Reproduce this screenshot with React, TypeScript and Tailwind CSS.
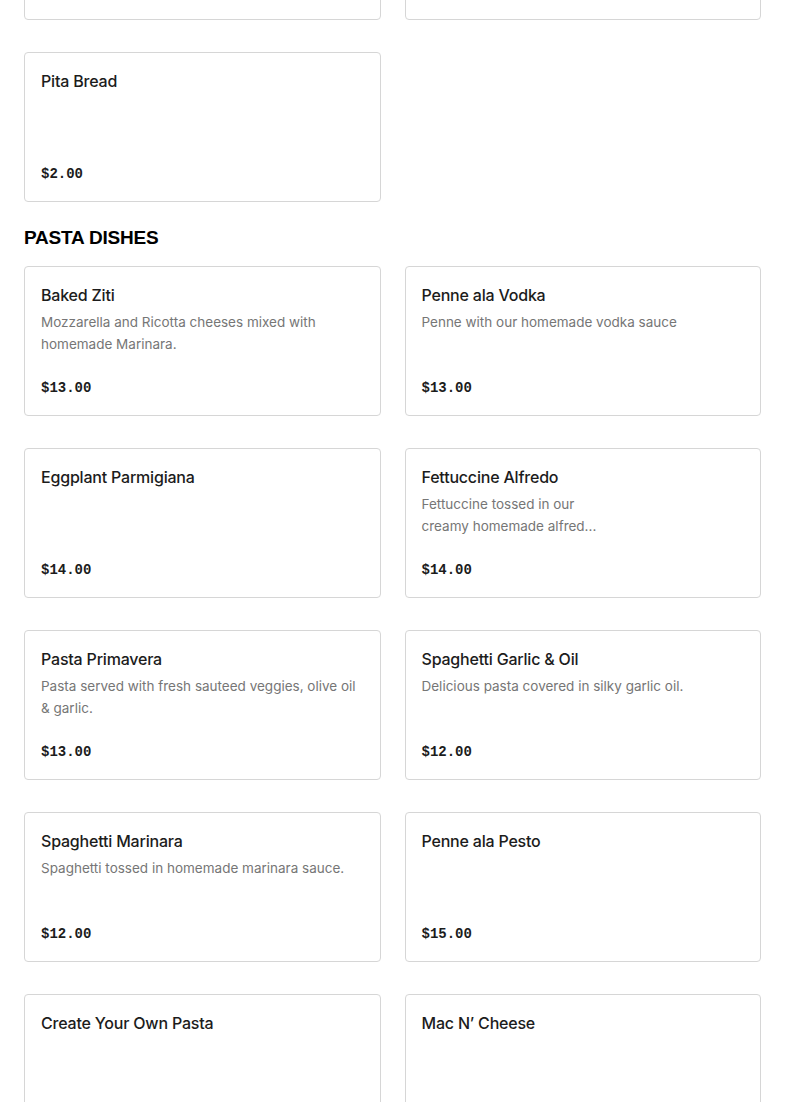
type Dish = {
  name: string;
  description?: string;
  price?: string;
};

const previousRow: Dish[] = [
  { name: "Hummus", price: "$6.00" },
  { name: "Baba Ganoush", price: "$6.00" },
];

const sides: Dish[] = [{ name: "Pita Bread", price: "$2.00" }];

const pastaDishes: Dish[] = [
  {
    name: "Baked Ziti",
    description: "Mozzarella and Ricotta cheeses mixed with homemade Marinara.",
    price: "$13.00",
  },
  {
    name: "Penne ala Vodka",
    description: "Penne with our homemade vodka sauce",
    price: "$13.00",
  },
  { name: "Eggplant Parmigiana", price: "$14.00" },
  {
    name: "Fettuccine Alfredo",
    description: "Fettuccine tossed in our\ncreamy homemade alfred...",
    price: "$14.00",
  },
  {
    name: "Pasta Primavera",
    description: "Pasta served with fresh sauteed veggies, olive oil & garlic.",
    price: "$13.00",
  },
  {
    name: "Spaghetti Garlic & Oil",
    description: "Delicious pasta covered in silky garlic oil.",
    price: "$12.00",
  },
  {
    name: "Spaghetti Marinara",
    description: "Spaghetti tossed in homemade marinara sauce.",
    price: "$12.00",
  },
  { name: "Penne ala Pesto", price: "$15.00" },
  { name: "Create Your Own Pasta", price: "$12.00" },
  { name: "Mac N’ Cheese", price: "$10.00" },
];

function DishCard({ dish }: { dish: Dish }) {
  return (
    <div className="flex h-[150px] flex-col rounded-[4px] border border-[#d6d6d6] bg-white px-4 pt-4 pb-[17px]">
      <h3 className="text-[16px] leading-6 font-medium tracking-[-0.2px] text-[#1c1c1c]">
        {dish.name}
      </h3>
      {dish.description && (
        <p className="mt-[4px] whitespace-pre-line text-[13.5px] leading-[22px] text-[#767676]">
          {dish.description}
        </p>
      )}
      <p className="mt-auto font-['Liberation_Mono',monospace] text-[14px] leading-5 font-bold text-[#1c1c1c]">
        {dish.price}
      </p>
    </div>
  );
}

export default function App() {
  return (
    <div className="min-h-screen overflow-hidden bg-white font-['Inter',sans-serif]">
      <div className="-mt-[130px] px-6 pb-10">
        {/* Tail of the previous section */}
        <div className="grid grid-cols-2 gap-x-6 gap-y-8">
          {previousRow.map((dish) => (
            <DishCard key={dish.name} dish={dish} />
          ))}
          {sides.map((dish) => (
            <DishCard key={dish.name} dish={dish} />
          ))}
        </div>

        {/* Pasta section */}
        <section className="mt-6">
          <h2 className="mb-4 font-['Liberation_Sans',sans-serif] text-[19px] leading-6 font-black tracking-[-0.2px] text-black">
            PASTA DISHES
          </h2>
          <div className="grid grid-cols-2 gap-x-6 gap-y-8">
            {pastaDishes.map((dish) => (
              <DishCard key={dish.name} dish={dish} />
            ))}
          </div>
        </section>
      </div>
    </div>
  );
}
